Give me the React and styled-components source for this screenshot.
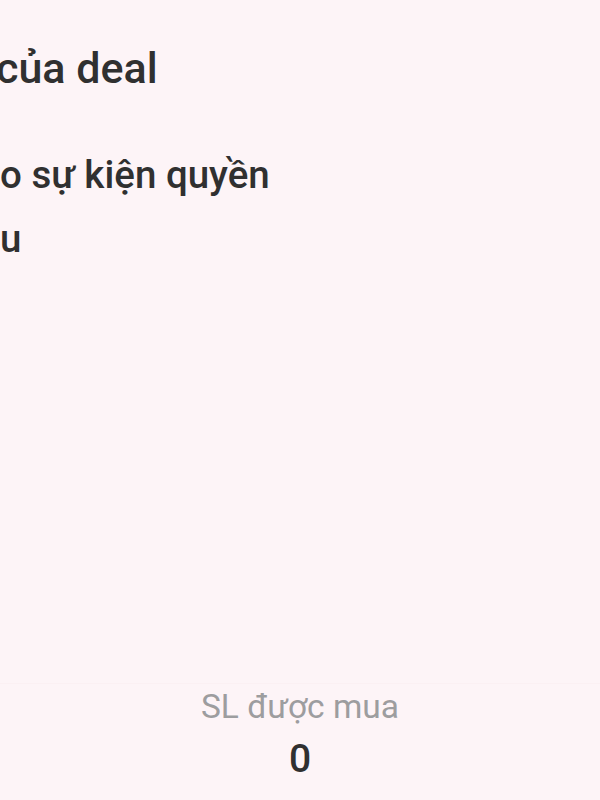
import styled, { createGlobalStyle } from 'styled-components';

const GlobalStyle = createGlobalStyle`
  html, body {
    margin: 0;
    padding: 0;
    background: #fdf4f7;
    overflow: hidden;
  }
  body {
    font-family: Roboto, "Noto Sans", "Liberation Sans", sans-serif;
  }
`;

const Screen = styled.div`
  width: 600px;
  height: 800px;
  display: flex;
  flex-direction: column;
  background: #fdf4f7;
  overflow: hidden;
`;

const Content = styled.div`
  flex: 1;
  display: flex;
  flex-direction: column;
  padding-top: 40px;
`;

const Title = styled.h1`
  margin: 0 0 0 -4px;
  font-size: 43px;
  font-weight: 500;
  line-height: 56px;
  color: #303030;
  white-space: nowrap;
`;

const Body = styled.p`
  margin: 47px 0 0 0;
  font-size: 38.5px;
  font-weight: 500;
  line-height: 64px;
  color: #303030;
  white-space: pre-line;
`;

const Footer = styled.div`
  display: flex;
  flex-direction: column;
  align-items: center;
  padding-bottom: 18px;
  border-top: 1px solid #fbf0f3;
`;

const StatLabel = styled.div`
  font-size: 33.5px;
  color: #9d9d9f;
  line-height: 46px;
`;

const StatValue = styled.div`
  margin-top: 6px;
  font-size: 39px;
  font-weight: 500;
  color: #303030;
  line-height: 46px;
`;

export default function App() {
  return (
    <Screen>
      <GlobalStyle />
      <Content>
        <Title>của deal</Title>
        <Body>{'o sự kiện quyền\nu'}</Body>
      </Content>
      <Footer>
        <StatLabel>SL được mua</StatLabel>
        <StatValue>0</StatValue>
      </Footer>
    </Screen>
  );
}
